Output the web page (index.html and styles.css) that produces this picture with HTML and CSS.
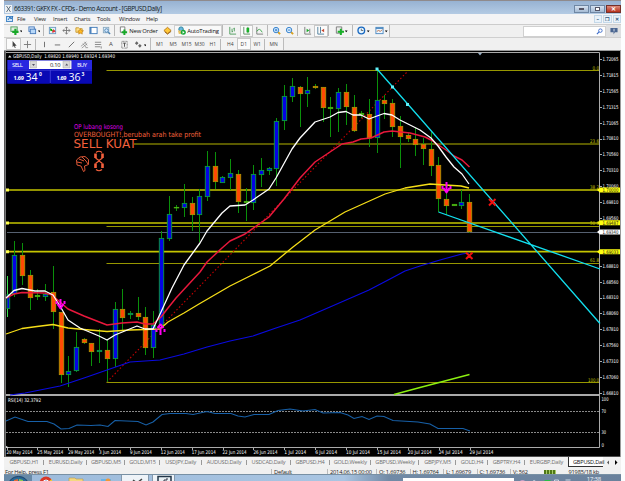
FILE: index.html
```html
<!DOCTYPE html>
<html lang="en">
<head>
<meta charset="utf-8">
<title>663391: GKFX FX - CFDs - Demo Account - [GBPUSD,Daily]</title>
<link rel="stylesheet" href="styles.css">
</head>
<body>
<div class="window">
  <header class="titlebar">
    <svg class="logo" viewBox="0 0 7 8"><rect width="7" height="8" fill="#eef2f5"/><path d="M1.5 1l4 6M5.500 1l-4 6" stroke="#456" stroke-width=".8"/></svg>
    <span class="title">663391: GKFX FX - CFDs - Demo Account - [GBPUSD,Daily]</span>
    <div class="winbtns"><b class="wb"><i class="min"></i></b><b class="wb"><i class="max"></i></b><b class="wb close">✕</b></div>
  </header>
  <nav class="menu">
    <svg class="logo2" viewBox="0 0 8 8"><rect x=".5" y="1.5" width="6" height="5" fill="#cfe6fa" stroke="#4a8ac8"/><path d="M2 5l2-3 1 2 2-3" stroke="#2a70b8" fill="none"/></svg>
    <span>File</span><span>View</span><span>Insert</span><span>Charts</span><span>Tools</span><span>Window</span><span>Help</span>
    <div class="mdi"><b>–</b><b>❐</b><b>✕</b></div>
  </nav>
  <div class="toolbar" id="main-bar">
    <div class="group g-main">
      <span class="cell w18"><svg viewBox="0 0 14 10"><rect x="1" y="1" width="7" height="5" fill="#dff0df" stroke="#4a9a5a"/><path d="M6 3v7M2.500 6.500h7" stroke="#18a828" stroke-width="2.400"/><path d="M11 5h3l-1.500 2z"/></svg></span>
      <span class="cell w18"><svg viewBox="0 0 14 10"><rect x="1" y="1" width="6" height="5" fill="#d8eaff" stroke="#4478b8"/><rect x="2.500" y="3.500" width="6" height="5" fill="#b8d8f8" stroke="#4478b8"/><path d="M11 5h3l-1.500 2z"/></svg></span>
      <i class="sep"></i>
      <span class="cell w14"><svg viewBox="0 0 10 10"><rect x="1.500" y="1.500" width="7" height="7" fill="#e4f1fb" stroke="#6a98c0"/><path d="M3 3l2 2H3z" fill="#0a0" stroke="#0a0"/><path d="M5 7l3-1-2-2z" fill="#d33" stroke="#d33"/></svg></span>
      <span class="cell w14"><svg viewBox="0 0 10 10"><path d="M5 1v8M1 5h8M3.500 2.500L5 1l1.500 1.500M3.500 7.500L5 9l1.500-1.500M2.500 3.500L1 5l1.500 1.500M7.500 3.500L9 5 7.500 6.500" fill="none" stroke="#777"/></svg></span>
      <span class="cell w14"><svg viewBox="0 0 10 10"><path d="M1 2h3l1 1h3v4H1z" fill="#ffe08a" stroke="#c89830"/><path d="M6 3l1 2 2.500.3-1.800 1.500.5 2.200L6 8l-2 1 .5-2-1.500-1.500L5 5z" fill="#ffb820" stroke="#b87810" stroke-width=".6"/></svg></span>
      <span class="cell w14"><svg viewBox="0 0 10 10"><rect x="1" y="1.500" width="8" height="7" fill="#fff" stroke="#3d78b8"/><path d="M2 1v7" stroke="#3d78b8" stroke-width="1.500"/></svg></span>
      <span class="cell w14"><svg viewBox="0 0 10 10"><rect x="1.500" y="1.500" width="6" height="6" fill="#e8f2fa" stroke="#88a8c0"/><circle cx="5" cy="5" r="2" fill="#d0e8ff" stroke="#4a80b0"/><path d="M7 7l2 2" stroke="#4a80b0" stroke-width="1.500"/></svg></span>
      <i class="sep"></i>
      <span class="cell order"><svg viewBox="0 0 10 10"><path d="M1.500 1h5v6h-5z" fill="#fff" stroke="#777"/><path d="M6 4v6M3 7h6" stroke="#18a828" stroke-width="2.200"/></svg><em>New Order</em></span>
      <span class="cell w14"><svg viewBox="0 0 10 10"><path d="M1 5l4-3.500L9 5 5 8.500z" fill="#ffc838" stroke="#b87818"/><path d="M2 6.500l3 2.500 4-3" stroke="#996010" fill="none"/></svg></span>
      <span class="cell auto"><svg viewBox="0 0 10 10"><circle cx="4.500" cy="3.500" r="2.500" fill="#68b8e0" stroke="#28809a"/><path d="M1 5h7v4H2z" fill="#e8c468"/><circle cx="7" cy="7" r="2.800" fill="#18a838"/><path d="M6.200 5.500l2.300 1.500-2.300 1.500z" fill="#fff"/></svg><em>AutoTrading</em></span>
      <i class="sep s4"></i>
      <span class="cell w14"><svg viewBox="0 0 10 10"><path d="M2 1v8h7M4.500 3v4M7 2v4M4.500 6h1M6 3h1" fill="none" stroke="#4a9a58"/></svg></span>
      <span class="cell w14 on"><svg viewBox="0 0 10 10"><path d="M2 1v8h7M6.500 1v7" fill="none" stroke="#588a60"/><path d="M5 2h3v5H5z" fill="#18b028"/></svg></span>
      <span class="cell w14"><svg viewBox="0 0 10 10"><path d="M2 1v8h7" fill="none" stroke="#777"/><path d="M2 6q3-5 6 1" fill="none" stroke="#38a848"/></svg></span>
      <i class="sep"></i>
      <span class="cell w14"><svg viewBox="0 0 10 10"><path d="M6.500 6.500L9 9" stroke="#d8a020" stroke-width="2"/><circle cx="4.500" cy="4.500" r="3" fill="#dcefff" stroke="#2878c8"/><path d="M3 4.500h3M4.500 3v3" stroke="#2878c8"/></svg></span>
      <span class="cell w14"><svg viewBox="0 0 10 10"><path d="M6.500 6.500L9 9" stroke="#d8a020" stroke-width="2"/><circle cx="4.500" cy="4.500" r="3" fill="#dcefff" stroke="#2878c8"/><path d="M3 4.500h3" stroke="#2878c8"/></svg></span>
      <i class="sep s4"></i>
      <span class="cell w14"><svg viewBox="0 0 10 10"><path d="M2 1v8h7M7.500 3v5" fill="none" stroke="#777"/><path d="M4 3l3 2-3 2z" fill="#18a828"/></svg></span>
      <span class="cell w14 on"><svg viewBox="0 0 10 10"><path d="M2 1v8h7M5 1v7" fill="none" stroke="#4a7a98"/><path d="M6 5l3-2v4z" fill="#c84830"/></svg></span>
      <i class="sep s4"></i>
      <span class="cell w20"><svg viewBox="0 0 14 10"><path d="M1.500 1h6v7h-6z" fill="#eee" stroke="#777"/><path d="M6.500 3v7M3 6.500h7" stroke="#18b028" stroke-width="2.200"/><path d="M11 5h3l-1.500 2z"/></svg></span>
      <i class="sep"></i>
      <span class="cell w18"><svg viewBox="0 0 14 10"><circle cx="4.800" cy="5" r="3.700" fill="#e4f4ff" stroke="#1868c0" stroke-width="1.500"/><path d="M4.800 3v2H7" fill="none" stroke="#444" stroke-width=".8"/><path d="M11 5h3l-1.500 2z"/></svg></span>
      <span class="cell w18"><svg viewBox="0 0 14 10"><rect x="1" y="1.500" width="8" height="7" fill="#eef6ff" stroke="#4a88c0"/><path d="M1 2.500h8" stroke="#4a88c0" stroke-width="1.500"/><path d="M2 6l2-1 2 1 2-2" stroke="#b86838" fill="none"/><path d="M11 5h3l-1.500 2z"/></svg></span>
    </div>
    <div class="search"><svg viewBox="0 0 8 8"><circle cx="5" cy="3" r="2" fill="#fff" stroke="#3868c8"/><path d="M3.500 4.500L1 7" stroke="#3868c8" stroke-width="1.300"/></svg></div>
    <div class="chat"><svg viewBox="0 0 9 9"><path d="M.5 1h8v5H5.500L4 8.500V6H.5z" fill="#4a6590"/><path d="M4.500 2v3" stroke="#e0e8f4"/></svg></div>
  </div>
  <div class="toolbar second">
    <div class="group g-draw">
      <span class="cell w15 on"><svg viewBox="0 0 10 10"><path d="M4 1v7l1.500-1.500L6.500 9l1-.5-1-2.200h2z" fill="#444"/></svg></span>
      <span class="cell w14"><svg viewBox="0 0 10 10"><path d="M5 1v8M1 5h8" stroke="#777"/></svg></span>
      <i class="sep"></i>
      <span class="cell w14"><svg viewBox="0 0 10 10"><path d="M5 2v6" stroke="#666"/></svg></span>
      <span class="cell w14"><svg viewBox="0 0 10 10"><path d="M2 5.500h6" stroke="#666"/></svg></span>
      <span class="cell w14"><svg viewBox="0 0 10 10"><path d="M2 8l6-6" stroke="#666"/></svg></span>
      <span class="cell w14"><svg viewBox="0 0 10 10"><path d="M1 7l6-5M2 9l6-5M3 4l4 4M5 2l3 4M6 8.500h3" stroke="#777" stroke-width=".7"/></svg></span>
      <span class="cell w13"><svg viewBox="0 0 10 10"><path d="M1 2.500h7M1 5h7M1 7.500h6M8 7v2.500" stroke="#777" stroke-width=".9"/></svg></span>
      <span class="cell w13 big">A</span>
      <span class="cell w14"><svg viewBox="0 0 10 10"><path d="M2 1.500h6v7.500H2z" fill="none" stroke="#777" stroke-dasharray="1 .5"/><path d="M3.500 3.500h3M5 3.500v4" stroke="#444"/></svg></span>
      <span class="cell w18"><svg viewBox="0 0 14 10"><path d="M1 3.500L3 1.500l2 2-2 2zM4.500 6.500l2-2 2 2-2 2z" fill="#666"/><path d="M11 5h3l-1.500 2z"/></svg></span>
    </div>
    <div class="group g-time">
      <span class="cell w14">M1</span><span class="cell w14">M5</span><span class="cell w13">M15</span><span class="cell w13">M30</span><span class="cell w14">H1</span><i class="sep s4"></i><span class="cell w14">H4</span><span class="cell w14 on">D1</span><span class="cell w14">W1</span><i class="sep"></i><span class="cell w14">MN</span>
    </div>
  </div>
  <main class="chart">
    <svg id="plot" viewBox="4 50 617 407" width="617" height="407">
      <rect x="4" y="50" width="617" height="407" fill="#9a9a9a"/>
      <rect x="4" y="51" width="1.500" height="406" fill="#555"/>
      <rect x="6" y="51" width="614" height="405.500" fill="#000"/>
      <path d="M6 52.500H599.500V447.500H6" fill="none" stroke="#aaa"/>
      <path d="M6 395H600" stroke="#aaa" stroke-width="1.800"/>
      <path d="M478 53h4l-2 2.500z" fill="#9cb4cc"/>
      <g id="levels" fill="none">
        <path d="M106.500 70.500H599M106.500 226.500H599M106.500 263.500H599M106.500 382.500H599" stroke="#979700"/>
        <path d="M134 144H599" stroke="#5a5a00" stroke-width="1.800"/>
        <path d="M7 190H603M7 223H603M7 251.700H603" stroke="#c4c400" stroke-width="1.700"/>
        <path d="M7 232.500H599" stroke="#566070"/>
        <path d="M107 382L407 72" stroke="#c80000" stroke-width="1.100" stroke-dasharray="1.500 2.200"/>
      </g>
      <g id="candles"></g>
      <g fill="none" stroke-linejoin="round">
        <polyline stroke="#0a0ae0" stroke-width="1.200" points="10,395 25,393 60,386 84,378 107,370 130,362 160,360 184,354 207,347 230,341 253,336 276,328 300,320 330,307 369,290 390,279 405,271 420,266 440,260 462,254 469,253"/>
        <polyline stroke="#f6de18" stroke-width="1.300" points="6,334 22,328.500 37,326.500 53,324.500 68,328 84,329.500 107,331.500 130,330 160,329 168,322 184,313 199,304 230,286 250,276 270,266 293,247 315,230 345,212 365,203 385,194 405,188 430,184 445,185 461,186 469,188"/>
        <polyline stroke="#e8183c" stroke-width="1.500" points="6,298 14,294 22,292.500 45,293 52,295 60,302 68,309 84,316 107,325 122,323 137,322 145,324 153,324 161,317 168,308 176,298 200,272 207,262 222,248 230,241 245,234 269,217 284,199 300,178 315,162 330,152 342,144 353,142 361,139 371,138 384,132 392,131 410,133 425,137 431,140 446,150 454,156 462,160 469.500,167"/>
        <polyline stroke="#fff" stroke-width="1.300" points="6,298 14,290.500 22,288.500 35,291 45,291 53,295 60,306 68,320 80,328 99,336 107,340 115,335 137,326 145,329 153,329 161,312 172,288 184,265 200,243 207,231 222,213 230,206 245,205 253,200 269,189 276,178 292,149 300,138 315,122 330,117 338,112.500 346,111.500 353,115 361,115 369,119 377,116 384,113.500 392,115 400,120 420,130 431,138 438,146 446,157 454,167 462,174 469,184"/>
        <polyline stroke="#8cf010" stroke-width="1.300" points="394,394.500 420,387.500 469.500,374.500"/>
        <path d="M377 69L600 323.500M438.500 212L600 269" stroke="#12dfee" stroke-width="1.300"/>
        <path d="M60.500 299v7M57.500 304l3 4.500 3-4.500M56.500 301v3M64.500 301v3M160.500 335v-8M157.500 328l3-3.500 3 3.500M156.500 332v-3M164.500 332v-3M446.500 182v9M443.500 188l3 4.500 3-4.500M442.500 186v3M450.500 186v3" stroke="#ff00f0" stroke-width="2"/>
        <path d="M489 199l6.500 6.500M495.500 199l-6.500 6.500M466 252.500l6.500 6.500M472.500 252.500l-6.500 6.500" stroke="#f01010" stroke-width="2"/>
      </g>
      <path d="M375.500 67.500h3v3h-3zM391 85.500h3v3h-3zM406 103h3v3h-3z" fill="#5ff0f8"/>
      <path d="M6 188.500h3v3H6zM6 221.500h3v3H6zM6 250.200h3v3H6z" fill="#ffff50"/>
      <g class="comment">
        <text x="74" y="129" font-size="6.600" textLength="49" lengthAdjust="spacingAndGlyphs" fill="#dc00e4">OP lubang kosong</text>
        <text x="74" y="137" font-size="7.200" textLength="127" lengthAdjust="spacingAndGlyphs" fill="#f4603c">OVERBOUGHT!,berubah arah take profit</text>
        <text x="73.500" y="148" font-size="12.500" textLength="63" lengthAdjust="spacingAndGlyphs" fill="#f4603c">SELL KUAT</text>
        <path d="M76.500 160l3.500-3 5-.5 3.500 3v5l-4 1.500.5 4.500-1.500 1-2.500-5.500-4-1zM77 162l5 1M79 159l5 2M82 157l4 4 2 3" fill="none" stroke="#f4603c" stroke-width=".9"/>
        <path d="M95.500 153.500v4.500M102.500 153.500v4.500M95.500 163.500v4.500M102.500 163.500v4.500" stroke="#f4603c" stroke-width="2.600"/>
        <path d="M96 152.500q3-2.500 6 0M96 169.500q3 2.500 6 0M95.500 158l3.500 2.500 3.500-2.500M95.500 163.500l3.500-2.500 3.500 2.500" fill="none" stroke="#f4603c" stroke-width="1.200"/>
      </g>
      <path d="M6 411.500H599M6 432.500H599" stroke="#999" stroke-width=".9" stroke-dasharray="2 1"/>
      <polyline fill="none" stroke="#1760a8" stroke-width="1.100" points="6,421 15,417 28,421.500 47,421.500 54,424 61,429 69,428.500 77,425 91,425.500 100,425 108,426.500 115,420.500 138,421.500 146,425 153,422 162,414.500 170,413.500 186,413.500 193,414.500 207,411.500 215,413.500 231,413.500 238,416 245,417 254,414.500 269,414.500 278,410.500 290,409 303,411 315,409.500 323,413 340,412.500 348,415 354,418.500 362,416.500 369,419.500 377,416 384,416.500 393,420.500 418,422 430,424 438,428.500 463,428.500 470,431"/>
      <path d="M6 446l3 1.500H6z" fill="#fff"/>
      <g id="axis" class="axis"></g>
      <text class="small" x="13" y="58.300" textLength="102" lengthAdjust="spacingAndGlyphs">GBPUSD,Daily&#160; 1.69820 1.69940 1.69324 1.69340</text>
      <path d="M8 57.500h3.500l-1.700-2.300z" fill="#ddd"/>
      <text class="small" x="8" y="402" textLength="33" lengthAdjust="spacingAndGlyphs">RSI(14) 32.3792</text>
      <g class="ticket">
        <rect x="7.500" y="60" width="84.500" height="23.500" fill="#0a0ac0"/>
        <rect x="7.500" y="60" width="21.500" height="9.500" fill="#2828e0"/>
        <rect x="72" y="60" width="20" height="9.500" fill="#2828e0"/>
        <rect x="7.500" y="70.500" width="42" height="13" fill="#0909b4"/>
        <rect x="51" y="70.500" width="41" height="13" fill="#0909b4"/>
        <path d="M7.500 70.200h84.500M50.300 70v13" stroke="#4444d8" stroke-width=".8"/>
        <rect x="29" y="60.500" width="42.500" height="8.500" fill="#fff"/>
        <path d="M30 61h6.500v7H30zM63 61h7v7h-7z" fill="#d8d8d8" stroke="#aaa" stroke-width=".5"/>
        <path d="M32 64h3l-1.500 2zM65.200 65.500h3l-1.500-2z" fill="#556"/>
        <text x="12" y="67" font-size="6" textLength="11">SELL</text>
        <text x="77" y="67" font-size="6" textLength="10">BUY</text>
        <text x="50" y="66.800" font-size="5.800" textLength="10.500" fill="#222">0.10</text>
        <text x="13.500" y="80.200" font-size="5.600" font-weight="700" textLength="10.500">1.69</text>
        <text x="25.500" y="80.500" font-size="10.500" textLength="12">34</text>
        <text x="39" y="76" font-size="5" font-weight="700">0</text>
        <text x="56.500" y="80.200" font-size="5.600" font-weight="700" textLength="10">1.69</text>
        <text x="68.500" y="80.500" font-size="10.500" textLength="12">36</text>
        <text x="81.500" y="76" font-size="5" font-weight="700">3</text>
      </g>
    </svg>
  </main>
  <div class="tabs">
    <span class="t40">GBPUSD,H1</span><span class="t43">EURUSD,Daily</span><span class="t38">GBPUSD,M5</span><span class="t35">GOLD,M15</span><span class="t42">USDJPY,Daily</span><span class="t45">AUDUSD,Daily</span><span class="t44">USDCAD,Daily</span><span class="t39">GBPUSD,H4</span><span class="t42">GOLD,Weekly</span><span class="t48">GBPUSD,Weekly</span><span class="t37">GBPJPY,M5</span><span class="t32">GOLD,H4</span><span class="t37">GBPTRY,H4</span><span class="t43 last">EURGBP,Daily</span><span class="active">GBPUSD,Dail</span>
    <div class="arrows"><svg viewBox="0 0 12 5"><path d="M3 .5v4l-2-2z" fill="#555"/><path d="M9 0v5l2.500-2.500z"/></svg></div>
  </div>
  <div class="status">
    <span class="help">For Help, press F1</span><span class="profile">Default</span><span class="date">2014.06.15 00:00</span><span class="q">O: 1.69736</span><span class="q">H: 1.69764</span><span class="q">L: 1.69679</span><span class="q">C: 1.69736</span><span class="q">V: 562</span><span class="bars"></span><span class="kb">91985/18 kb</span>
  </div>
  <footer class="taskbar">
    <div class="orb"><svg viewBox="0 0 28 8"><ellipse cx="14.500" cy="9" rx="9.500" ry="7.500" fill="#286a98" stroke="#1c4068"/><path d="M10 5l4-1v4h-4z" fill="#e06a38"/><path d="M15 4l4 1v3h-4z" fill="#8cc850"/></svg></div>
    <div class="task"><svg viewBox="0 0 28 8"><circle cx="14" cy="8" r="6.500" fill="#d83828"/><path d="M14 8l6-4v4z" fill="#f4cc30"/><circle cx="14" cy="8" r="3" fill="#3a80d8" stroke="#fff"/></svg></div>
    <div class="task"><svg viewBox="0 0 28 8"><path d="M7 3h6l1 1h7v4H7z" fill="#f4d880" stroke="#b89848" stroke-width=".6"/><path d="M11 6h7v2h-7z" fill="#68a8d8"/></svg></div>
    <div class="task"><svg viewBox="0 0 28 8"><path d="M10 4h10v4H10z" fill="#68b4e8"/><circle cx="17" cy="6" r="2.500" fill="#f09838"/></svg></div>
    <div class="task lit"><svg viewBox="0 0 28 8"><path d="M11 5l4 3M20 4l-5 4" stroke="#444" stroke-width="1.500"/></svg></div>
    <div class="task lit two"><svg viewBox="0 0 22 8"><path d="M5 1.500h13v7H5z" fill="#e8f0f4" stroke="#223648" stroke-width="1.500"/><path d="M9 7h2V5h3V3" fill="none" stroke="#334"/></svg></div>
    <div class="field"></div>
    <div class="tray"><svg viewBox="0 0 72 8"><ellipse cx="8" cy="8" rx="3" ry="3" fill="#c8a0c8"/><path d="M17 8q3-5 5 0M40 5h4v3h-4zM51 5h5" fill="none" stroke="#ccd8e4"/><path d="M30 5h6v3h-6z" fill="#28c048"/></svg><span>17:38</span></div>
  </footer>
</div>
<script src="chart.js"></script>
</body>
</html>
```
FILE: styles.css
```css
* { box-sizing: border-box; }
body { margin: 0; background: #fdfdfe; font-family: "Open Sans", "Noto Sans", sans-serif; overflow: hidden; }
.window { width: 617px; height: 481px; margin-left: 4px; background: #f0f0f0; display: flex; flex-direction: column; overflow: hidden; }
em, i { font-style: normal; }
svg { display: block; flex: none; }

.titlebar { height: 14px; flex: none; border-top: 1px solid #8f8a8c; background: linear-gradient(#97b2d2, #b4cbe4); display: flex; align-items: center; padding-left: 1px; }
.logo { width: 7px; height: 8px; margin: 3px 2px 0 0; }
.title { font-size: 6.4px; line-height: 12px; color: #101820; white-space: nowrap; letter-spacing: -.42px; margin-top: 3px; }
.winbtns { margin: 2px 0 0 auto; display: flex; gap: 1px; }
.wb { width: 15px; height: 8px; border: 1px solid #6f87a4; background: linear-gradient(#d6e2f0, #a5bbd4); display: flex; align-items: center; justify-content: center; font-size: 6px; line-height: 6px; }
.min { width: 5px; height: 2px; background: #fff; border: .5px solid #556; }
.max { width: 5px; height: 4px; border: 1px solid #556; background: #fff; }
.close { background: linear-gradient(#dc8c7c, #b8301c); border-color: #74302a; color: #fff; }

.menu { height: 10.5px; flex: none; background: #f4f4f5; border-bottom: 1px solid #ccc; display: flex; align-items: center; font-size: 5.8px; letter-spacing: -.2px; line-height: 10px; color: #222; padding-left: 2px; }
.logo2 { width: 8px; height: 8px; margin-right: 2px; }
.menu span { flex: none; }
.menu span:nth-of-type(1) { width: 17px; padding-left: 1px; }
.menu span:nth-of-type(2) { width: 20px; padding-left: 1px; }
.menu span:nth-of-type(3) { width: 21px; }
.menu span:nth-of-type(4) { width: 23px; }
.menu span:nth-of-type(5) { width: 22px; }
.menu span:nth-of-type(6) { width: 27px; }
.mdi { margin-left: auto; display: flex; gap: 1px; }
.mdi b { width: 8.5px; height: 8.5px; background: #e9f2fa; border: 1px solid #c4d8e8; color: #34587c; font-size: 5px; line-height: 6px; text-align: center; }

.toolbar { height: 13.5px; flex: none; display: flex; align-items: stretch; background: #f0f0f0; border-bottom: 1px solid #cfcfcf; }
.second { height: 12px; border-bottom: 0; }
.group { display: flex; align-items: center; border-right: 1px solid #bcbcbc; padding-left: 3px; background: #f3f3f3; flex: none; }
.g-main { width: 386px; }
.g-draw { width: 147px; padding-left: 2px; }
.g-time { width: 133px; padding-left: 2px; }
.cell { display: flex; align-items: center; justify-content: center; height: 12px; flex: none; font-size: 5px; line-height: 10px; color: #444; }
.cell.big { font-size: 6px; }
.cell svg { height: 9px; }
.on { background: #fbfbfb; border: 1px solid #c8c8c8; }
.sep { width: 3px; height: 11px; border-left: 1px solid #b8b8b8; flex: none; }
.s4 { width: 4px; }
.w13 { width: 13px; } .w14 { width: 13.5px; } .w15 { width: 15px; } .w18 { width: 18px; } .w20 { width: 20px; }
.order { width: 44px; }
.order em, .auto em { font-size: 5.9px; letter-spacing: -.2px; color: #111; margin-left: 1px; white-space: nowrap; }
.auto { width: 48px; border: 1px solid #d0d0d0; background: #f9f9f9; }
.search { margin-left: auto; width: 83px; height: 11px; margin-top: 1px; background: #fff; border: 1px solid #d0d0d0; display: flex; justify-content: flex-end; align-items: center; padding-right: 2px; }
.search svg { width: 7px; height: 7px; }
.chat { width: 15px; display: flex; align-items: center; justify-content: center; background: #dedfe1; }
.chat svg { width: 8px; height: 8px; }

.chart { height: 407px; flex: none; }
.chart svg { font-family: "Open Sans", sans-serif; }
.comment { font-family: "DejaVu Sans Condensed", "Noto Sans", sans-serif; }
.axis text, .small { font-family: "DejaVu Sans Condensed", "DejaVu Sans", sans-serif; font-size: 5.2px; fill: #fff; }
.axis .fib { fill: #c4c400; }
.axis .dark { fill: #111; }
.ticket text { fill: #fff; }
.ticket text[fill] { fill: #222; }

.tabs { height: 10px; flex: none; display: flex; background: #f1f1f1; color: #707070; font-size: 5.6px; letter-spacing: -.22px; line-height: 10px; }
.tabs span { display: flex; justify-content: center; align-items: center; white-space: nowrap; flex: none; background: linear-gradient(#999, #999) right center / 1px 5px no-repeat; }
.tabs .last { background: none; }
.tabs .active { width: 35px; background: #fff; color: #111; border-left: 1px solid #333; border-bottom: 1px solid #333; justify-content: flex-start; padding-left: 4px; }
.t32 { width: 32px; } .t35 { width: 35px; } .t37 { width: 37px; } .t38 { width: 38px; } .t39 { width: 39px; } .t40 { width: 40px; } .t42 { width: 41.5px; } .t43 { width: 43px; } .t44 { width: 44px; } .t45 { width: 45px; } .t48 { width: 48px; }
.arrows { padding: 2.5px 0 0 3px; }
.arrows svg { width: 12px; height: 5px; }

.status { height: 6.5px; flex: none; overflow: hidden; display: flex; align-items: flex-start; font-size: 5.7px; letter-spacing: -.2px; line-height: 7px; padding: 2px 0 0 1px; color: #222; background: #f0f0f0; }
.status span { flex: none; white-space: nowrap; border-left: 1px solid #bbb; padding-left: 2px; }
.status .help { width: 266px; border: 0; padding: 0; }
.status .profile { width: 56px; }
.status .date { width: 49px; }
.status .q { width: 33.5px; }
.status .bars { width: 12px; height: 4px; margin: 1px 13px 0 0; background: repeating-linear-gradient(90deg, #507818 0 2px, #a8cc68 2px 3px); border: 0; }
.status .kb { border: 0; padding: 0; }

.taskbar { height: 8px; flex: none; display: flex; border-top: 1px solid #7890a4; background: linear-gradient(90deg, #9dbbdb 0, #a9c5e2 340px, #718aa6 385px, #6a819c 617px); }
.orb { width: 28px; background: #688aa8; }
.task { width: 29.6px; }
.orb svg, .task svg { width: 28px; height: 8px; }
.lit { width: 28px; background: #eef3f8; border: 1px solid #8498ac; border-width: 0 1px; }
.two { width: 23px; margin-left: 3px; }
.two svg { width: 22px; }
.field { width: 111px; height: 5px; margin: 3px 0 0 228px; background: #fff; }
.tray { display: flex; align-items: flex-start; color: #f4f8fc; font-size: 6px; letter-spacing: -.2px; line-height: 8px; }
.tray svg { width: 73px; height: 8px; }
```
FILE: chart.js
```js
const NS = 'http://www.w3.org/2000/svg';
const add = (parent, tag, attrs, text) => {
  const el = document.createElementNS(NS, tag);
  for (const k in attrs) el.setAttribute(k, attrs[k]);
  if (text) el.textContent = text;
  parent.appendChild(el);
};

// high, low, body top, body bottom, kind: b = rising, o = falling, d = doji
const bars = `276 317 294 309 b|241 297 255 294 b|243 285 255 276 o|270 310 275 298 o|289 300 295 297 d|284 301 294 297 b
266 329 292 312 o|312 383 312 375 o|356 387 371 375 b|332 372 347 371 b|338 344 339 343 o|343 366 343 352 o
329 363 350 352 b|340 382 350 359 o|302 367 309 359 b|289 331 309 318 o|311 319 313 315 b|297 320 313 317 o
307 355 317 348 o|311 358 325 348 b|231 325 238 325 b|196 241 214 239 b|205 211 207 208 d|184 217 203 208 b
197 231 203 215 o|189 242 196 215 b|151 201 166 197 b|152 189 166 182 o|176 183 177 183 b|159 190 173 178 b
170 213 174 202 o|188 221 201 203 d|165 210 174 203 b|158 187 170 175 b|167 175 168 171 b|118 186 121 169 b
85 130 96 121 b|78 102 86 97 b|86 127 87 94 o|77 107 90 94 b|84 89 86 88 o|87 122 87 108 o
97 137 107 109 d|88 132 92 109 b|84 125 92 107 o|95 132 107 131 o|111 118 113 115 d|99 147 114 138 o
69 153 100 138 b|95 119 100 104 o|99 137 103 127 o|116 168 126 137 o|133 142 135 139 o|128 156 139 145 o
138 165 144 149 o|132 176 149 166 o|157 212 165 199 o|190 215 199 206 o|204 206 204 206 d|190 209 202 206 b
194 233 202 232 o`.split(/[|\n]/).map(s => s.split(' '));

const candles = document.getElementById('candles');
const step = 7.71;
bars.forEach(([hi, lo, top, bottom, kind], i) => {
  const x = Math.round(6.6 + i * step) + 0.5;
  add(candles, 'path', { d: `M${x} ${hi}V${lo}`, stroke: i === 0 ? '#3ee050' : '#0a900a' });
  const left = i === 0 ? x - 0.5 : x - 2.2;
  add(candles, 'rect', {
    x: left, y: +top + 0.4, width: x + 2.2 - left, height: Math.max(bottom - top - 0.8, 0.5),
    fill: { b: '#0404e4', o: '#ff4a04', d: '#48b010' }[kind],
    stroke: { b: '#0a9a40', o: '#b09000', d: '#48b010' }[kind],
    'stroke-width': 0.9
  });
});

const axis = document.getElementById('axis');
const label = (x, y, textLength, text, cls) =>
  add(axis, 'text', { x, y, textLength, lengthAdjust: 'spacingAndGlyphs', class: cls || 'tick' }, text);

const prices = '1.72065 1.71815 1.71565 1.71315 1.71065 1.70810 1.70560 1.70310 1.70060 1.69810 1.69560 1.69310 1.69060 1.68810 1.68560 1.68310 1.68060 1.67810 1.67560 1.67310 1.67060 1.66810'.split(' ');
prices.forEach((p, i) => {
  if (i === 11 || i === 12) return;
  const y = 59 + i * 15.9;
  add(axis, 'path', { d: `M600 ${Math.round(y) + 0.5}h2`, stroke: '#aaa' });
  label(602.5, y + 1.9, 16, p);
});
[['1.70000', 190, '#ffff10'], ['1.69487', 222.7, '#ffff10'], ['1.69340', 232, '#ffffff'], ['1.69033', 251.7, '#ffff10']].forEach(([p, y, c]) => {
  add(axis, 'path', { d: `M597 ${y}l3-2.500h20v5h-20z`, fill: c });
  label(602.5, y + 1.9, 16, p, 'dark');
});
[['0.0', 592.5, 70], ['23.6', 590, 143], ['38.2', 590, 189], ['50.0', 590, 225.5], ['61.8', 590, 262.5], ['100.0', 588, 382]].forEach(([p, x, y]) => {
  label(x, y - 0.3, 599 - x, p, 'fib');
});
[['100', 401, 7], ['70', 413.3, 4.6], ['30', 434.3, 4.6], ['0', 446.5, 2.5]].forEach(([p, y, w]) => label(601.5, y, w, p));
'20 May 2014|25 May 2014|29 May 2014|3 Jun 2014|9 Jun 2014|12 Jun 2014|17 Jun 2014|22 Jun 2014|26 Jun 2014|1 Jul 2014|6 Jul 2014|10 Jul 2014|15 Jul 2014|20 Jul 2014|24 Jul 2014|29 Jul 2014'.split('|').forEach((d, i) => {
  const x = 6.5 + i * 30.87;
  add(axis, 'path', { d: `M${Math.round(x) + 0.5} 448v2`, stroke: '#aaa' });
  label(x, 454, d.includes('May') ? 26 : d.length > 10 ? 24 : 22, d);
});
```
